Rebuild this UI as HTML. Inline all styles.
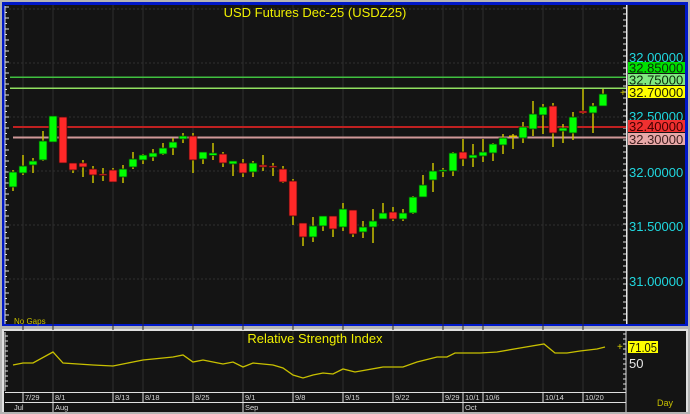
<!DOCTYPE html>
<html><head><meta charset="utf-8"><style>
html,body{margin:0;padding:0;background:#a8a8a8;}
svg{display:block;font-family:"Liberation Sans",sans-serif;}
</style></head><body>
<svg width="690" height="414" viewBox="0 0 690 414" xmlns="http://www.w3.org/2000/svg">
<rect x="0" y="0" width="690" height="414" fill="#b4b4b4"/>
<rect x="2" y="2" width="686" height="324" fill="#0018c8"/>
<rect x="5" y="5" width="680" height="319" fill="#141414"/>
<rect x="626" y="5" width="1.5" height="319" fill="#e8e8e8"/>
<rect x="2" y="329" width="686" height="85" fill="#e0e0e0"/>
<rect x="4" y="331" width="682" height="83" fill="#141414"/>
<g stroke="#2e2e2e" stroke-width="1">
<line x1="23" y1="5" x2="23" y2="392"/><line x1="53" y1="5" x2="53" y2="392"/><line x1="113" y1="5" x2="113" y2="392"/><line x1="143" y1="5" x2="143" y2="392"/><line x1="193" y1="5" x2="193" y2="392"/><line x1="243" y1="5" x2="243" y2="392"/><line x1="293" y1="5" x2="293" y2="392"/><line x1="343" y1="5" x2="343" y2="392"/><line x1="393" y1="5" x2="393" y2="392"/><line x1="443" y1="5" x2="443" y2="392"/><line x1="463" y1="5" x2="463" y2="392"/><line x1="483" y1="5" x2="483" y2="392"/><line x1="543" y1="5" x2="543" y2="392"/><line x1="583" y1="5" x2="583" y2="392"/>
</g>
<g stroke="#303030" stroke-dasharray="2,2">
<line x1="5" y1="9" x2="626" y2="9"/><line x1="5" y1="63" x2="626" y2="63"/><line x1="5" y1="117" x2="626" y2="117"/><line x1="5" y1="171" x2="626" y2="171"/><line x1="5" y1="225" x2="626" y2="225"/><line x1="5" y1="279" x2="626" y2="279"/>
</g>
<rect x="5" y="330" width="682" height="1" fill="#e0e0e0"/>
<g stroke="#e0e0e0" stroke-width="1">
<path d="M5 6V324M5 332V391"/>
<path d="M5 7h4M5 12.5h2M5 18h4M5 23.5h2M5 29h4M5 34.5h2M5 40h4M5 45.5h2M5 51h4M5 56.5h2M5 62h4M5 67.5h2M5 73h4M5 78.5h2M5 84h4M5 89.5h2M5 95h4M5 100.5h2M5 106h4M5 111.5h2M5 117h4M5 122.5h2M5 128h4M5 133.5h2M5 139h4M5 144.5h2M5 150h4M5 155.5h2M5 161h4M5 166.5h2M5 172h4M5 177.5h2M5 183h4M5 188.5h2M5 194h4M5 199.5h2M5 205h4M5 210.5h2M5 216h4M5 221.5h2M5 227h4M5 232.5h2M5 238h4M5 243.5h2M5 249h4M5 254.5h2M5 260h4M5 265.5h2M5 271h4M5 276.5h2M5 282h4M5 287.5h2M5 293h4M5 298.5h2M5 304h4M5 309.5h2M5 315h4M5 320.5h2"/>
<path d="M5 336h3M5 341h3M5 346h3M5 351h3M5 356h3M5 361h3M5 366h3M5 371h3M5 376h3M5 381h3M5 386h3"/>
<path d="M626 8h-3M626 14h-3M626 20h-3M626 26h-3M626 32h-3M626 38h-3M626 44h-3M626 50h-3M626 56h-3M626 62h-3M626 68h-3M626 74h-3M626 80h-3M626 86h-3M626 92h-3M626 98h-3M626 104h-3M626 110h-3M626 116h-3M626 122h-3M626 128h-3M626 134h-3M626 140h-3M626 146h-3M626 152h-3M626 158h-3M626 164h-3M626 170h-3M626 176h-3M626 182h-3M626 188h-3M626 194h-3M626 200h-3M626 206h-3M626 212h-3M626 218h-3M626 224h-3M626 230h-3M626 236h-3M626 242h-3M626 248h-3M626 254h-3M626 260h-3M626 266h-3M626 272h-3M626 278h-3M626 284h-3M626 290h-3M626 296h-3M626 302h-3M626 308h-3M626 314h-3M626 320h-3"/>
<path d="M626 331V412M626 334h-3M626 339h-3M626 344h-3M626 349h-3M626 354h-3M626 359h-3M626 364h-3M626 369h-3M626 374h-3M626 379h-3M626 384h-3M626 389h-3"/>
</g>
<rect x="10" y="76.5" width="616" height="1.5" fill="#40c040"/>
<rect x="10" y="87.5" width="616" height="1.5" fill="#90e060"/>
<rect x="13" y="126" width="613" height="2" fill="#c02020"/>
<rect x="13" y="136.5" width="613" height="2" fill="#d09898"/>
<text x="315" y="17" fill="#f0f000" font-size="13" text-anchor="middle">USD  Futures  Dec-25  (USDZ25)</text>
<g stroke="#c8c000" stroke-width="1.5">
<path d="M13 170V191M23 155V175M33 158V173M43 131V161M53 116V142M63 117V163M73 163V173M83 160V177M93 166V183M103 168V181M113 168V182M123 165V183M133 152V169M143 154V164M153 149V161M163 143V155M173 138V155M183 133V143M193 133V173M203 152V164M213 143V160M223 152V167M233 161V176M243 159V177M253 161V177M263 155V171M273 163V176M283 166V183M293 179V225M303 223V246M313 217V242M323 216V231M333 216V237M343 203V231M353 210V237M363 221V238M373 209V243M383 203V219M393 207V221M403 209V221M413 196V214M423 175V197M433 163V192M443 168V177M453 152V176M463 139V166M473 144V167M483 139V162M493 143V161M503 134V154M513 134V149M523 122V143M533 101V136M543 104V134M553 103V147M563 124V143M573 112V140M583 89V114M593 103V133M603 89V106"/>
</g>
<g fill="#00ff00" stroke="#0a3a0a" stroke-width="0.8">
<rect x="9" y="172" width="8" height="15"/><rect x="19" y="166" width="8" height="7"/><rect x="29" y="161" width="8" height="4"/><rect x="39" y="141" width="8" height="19"/><rect x="49" y="116" width="8" height="26"/>
<rect x="119" y="169" width="8" height="8"/><rect x="129" y="159" width="8" height="8"/><rect x="139" y="155" width="8" height="5"/><rect x="149" y="153" width="8" height="4"/><rect x="159" y="148" width="8" height="6"/><rect x="169" y="142" width="8" height="6"/><rect x="179" y="136" width="8" height="3"/>
<rect x="199" y="152" width="8" height="7"/><rect x="209" y="153" width="8" height="2.5"/><rect x="229" y="161" width="8" height="3"/><rect x="249" y="163" width="8" height="9"/>
<rect x="309" y="226" width="8" height="11"/><rect x="319" y="216" width="8" height="10"/><rect x="339" y="209" width="8" height="18"/><rect x="359" y="227" width="8" height="5"/><rect x="369" y="221" width="8" height="6"/><rect x="379" y="213" width="8" height="6"/><rect x="399" y="213" width="8" height="6"/><rect x="409" y="197" width="8" height="16"/><rect x="419" y="185" width="8" height="12"/><rect x="429" y="171" width="8" height="9"/><rect x="439" y="170" width="8" height="1.5"/><rect x="449" y="153" width="8" height="18"/>
<rect x="469" y="155" width="8" height="3"/><rect x="479" y="152" width="8" height="4"/><rect x="489" y="144" width="8" height="9"/><rect x="499" y="138" width="8" height="7"/><rect x="519" y="127" width="8" height="11"/><rect x="529" y="114" width="8" height="15"/><rect x="539" y="107" width="8" height="8"/><rect x="559" y="128" width="8" height="3"/><rect x="569" y="117" width="8" height="16"/><rect x="589" y="106" width="8" height="7"/><rect x="599" y="94" width="8" height="12"/>
</g>
<rect x="509" y="135.5" width="8" height="1.5" fill="#e0c000"/>
<g fill="#ff2828" stroke="#3a0a0a" stroke-width="0.8">
<rect x="59" y="117" width="8" height="46"/><rect x="69" y="163" width="8" height="7"/><rect x="79" y="163" width="8" height="4"/><rect x="89" y="169" width="8" height="6"/><rect x="99" y="174" width="8" height="1.5"/><rect x="109" y="170" width="8" height="12"/>
<rect x="189" y="136" width="8" height="24"/><rect x="219" y="154" width="8" height="9"/><rect x="239" y="163" width="8" height="10"/><rect x="259" y="165" width="8" height="2"/><rect x="269" y="166" width="8" height="1.5"/><rect x="279" y="169" width="8" height="13"/><rect x="289" y="181" width="8" height="35"/><rect x="299" y="223" width="8" height="14"/>
<rect x="329" y="216" width="8" height="13"/><rect x="349" y="210" width="8" height="24"/><rect x="389" y="212" width="8" height="7"/><rect x="459" y="152" width="8" height="7"/><rect x="549" y="106" width="8" height="27"/><rect x="579" y="111" width="8" height="2"/>
</g>
<text x="620" y="96" fill="#d8d000" font-size="10">+</text>
<g font-size="13">
<text x="629" y="62" fill="#20d8e0">32.00000</text>
<rect x="628" y="62" width="57" height="11" fill="#00e000"/><text x="629" y="72.5" fill="#0a2a0a">32.85000</text>
<rect x="628" y="74" width="57" height="11" fill="#80e880"/><text x="629" y="84.5" fill="#0a2a0a">32.75000</text>
<rect x="628" y="86" width="57" height="12" fill="#ffff00"/><text x="629" y="97" fill="#202000">32.70000</text>
<text x="629" y="121" fill="#20d8e0">32.50000</text>
<rect x="628" y="120" width="57" height="12" fill="#f03030"/><text x="629" y="131" fill="#400000">32.40000</text>
<rect x="628" y="133" width="57" height="12" fill="#e8a8a8"/><text x="629" y="144" fill="#402020">32.30000</text>
<text x="629" y="177" fill="#20d8e0">32.00000</text>
<text x="629" y="231" fill="#20d8e0">31.50000</text>
<text x="629" y="286" fill="#20d8e0">31.00000</text>
</g>
<text x="14" y="324" fill="#c8c000" font-size="8">No  Gaps</text>
<text x="315" y="343" fill="#f0f000" font-size="13" text-anchor="middle">Relative  Strength  Index</text>
<polyline fill="none" stroke="#c8c000" stroke-width="1.3" points="13,365 23,363 33,363 53,352 63,363 93,365 113,366 123,364 133,362 143,360 173,357 183,355 193,362 203,360 213,362 223,364 233,362 243,367 253,363 273,365 283,368 293,375 303,378 313,375 323,373 333,374 343,369 355,372 383,367 403,367 417,362 437,357 447,357 455,353 480,353 497,352 520,348 544,344 555,353 567,353 580,351 597,349 605,347"/>
<text x="617" y="350" fill="#d8d000" font-size="10">+</text>
<rect x="628" y="341" width="30" height="12" fill="#ffff00"/>
<text x="629" y="352" fill="#202000" font-size="12.5" textLength="28" lengthAdjust="spacingAndGlyphs">71.05</text>
<text x="629" y="368" fill="#e8e8e8" font-size="13">50</text>
<rect x="5" y="392" width="621" height="1" fill="#e0e0e0"/>
<rect x="5" y="402" width="621" height="1" fill="#e0e0e0"/>
<rect x="0" y="412" width="690" height="2" fill="#b4b4b4"/>
<g stroke="#e0e0e0" stroke-width="1">
<path d="M23 392V402M53 392V412M113 392V402M143 392V402M193 392V402M243 392V412M293 392V402M343 392V402M393 392V402M443 392V402M463 392V412M483 392V402M543 392V402M583 392V402"/>
</g>
<g fill="#d8d8d8" font-size="7.5">
<text x="25" y="400">7/29</text><text x="55" y="400">8/1</text><text x="115" y="400">8/13</text><text x="145" y="400">8/18</text><text x="195" y="400">8/25</text><text x="245" y="400">9/1</text><text x="295" y="400">9/8</text><text x="345" y="400">9/15</text><text x="395" y="400">9/22</text><text x="445" y="400">9/29</text><text x="465" y="400">10/1</text><text x="485" y="400">10/6</text><text x="545" y="400">10/14</text><text x="585" y="400">10/20</text>
<text x="14" y="410">Jul</text><text x="55" y="410">Aug</text><text x="245" y="410">Sep</text><text x="465" y="410">Oct</text>
</g>
<text x="657" y="406" fill="#c8c000" font-size="9">Day</text>
</svg>
</body></html>
